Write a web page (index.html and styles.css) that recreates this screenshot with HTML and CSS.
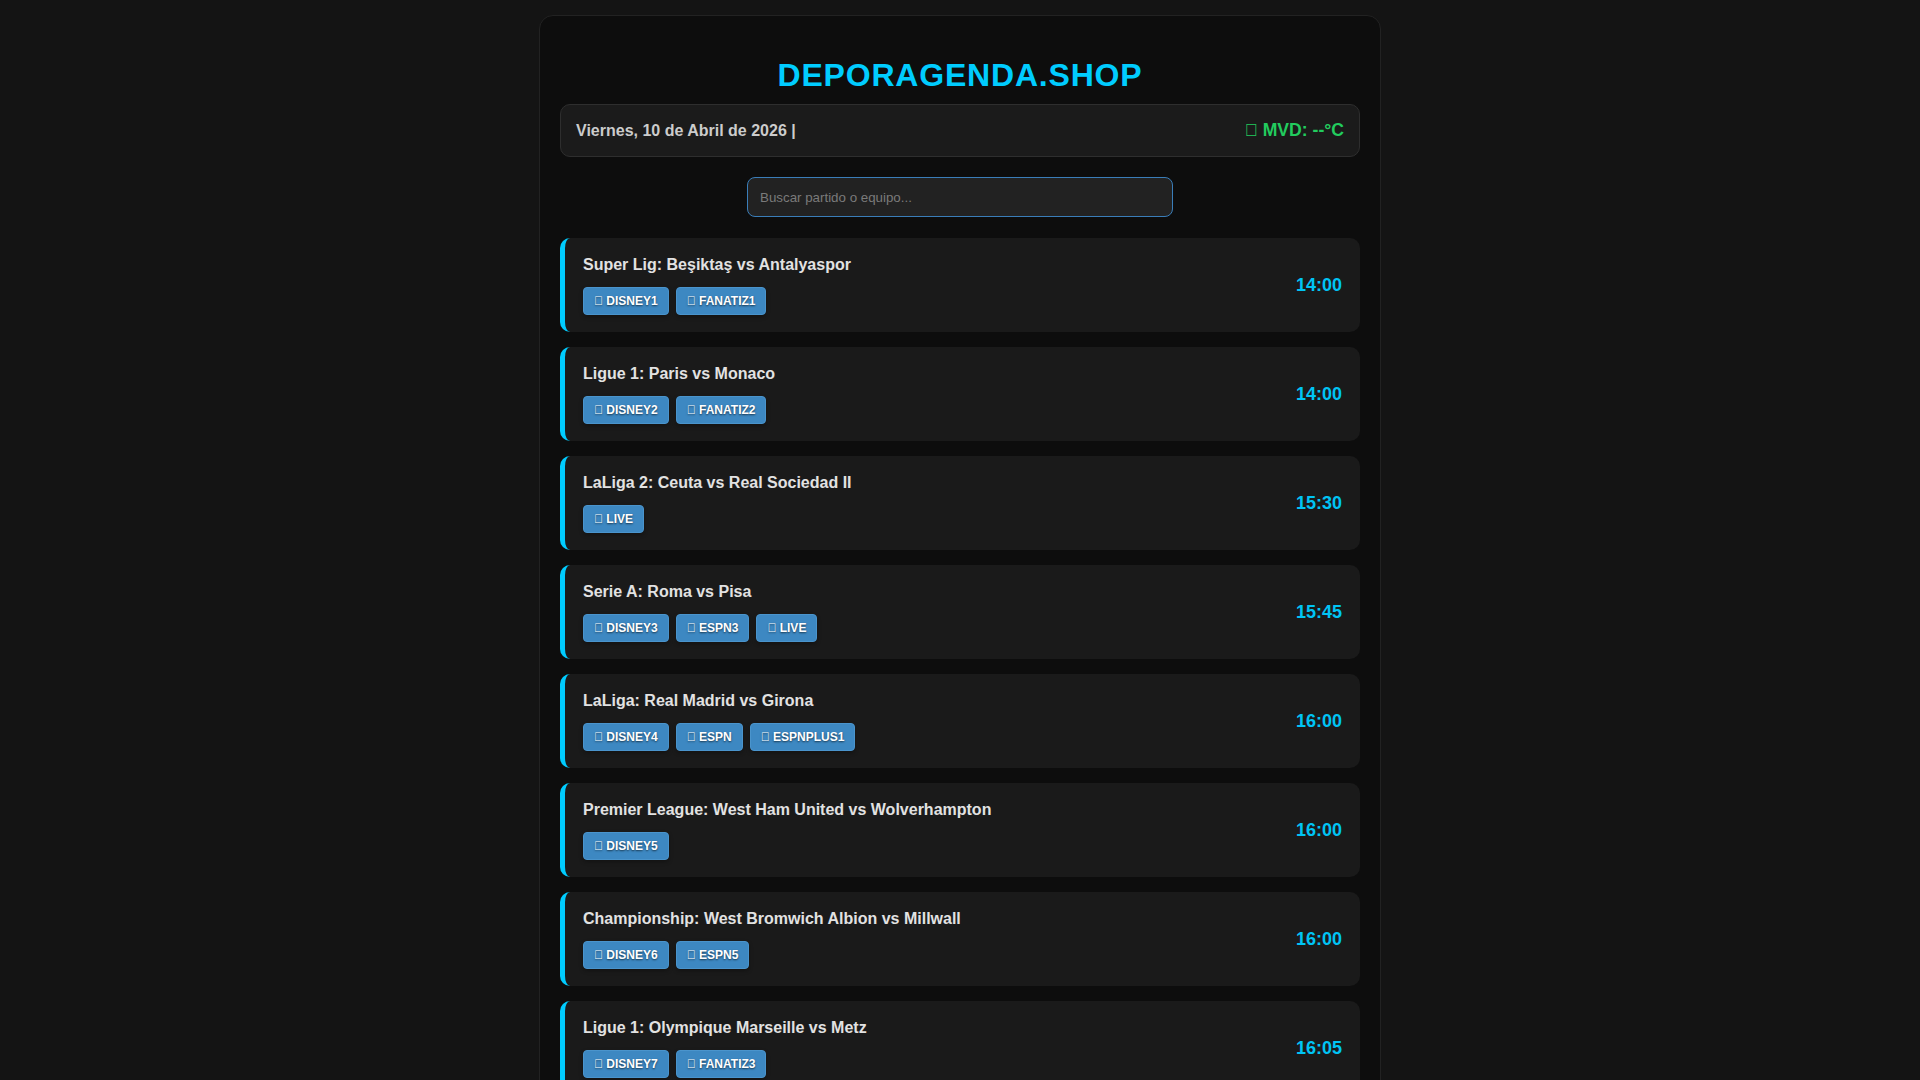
FILE: index.html
```html
<!DOCTYPE html>
<html lang="es">
<head>
<meta charset="utf-8">
<title>DEPORAGENDA.SHOP</title>
<link rel="stylesheet" href="styles.css">
</head>
<body>
<div class="container">
  <h1 class="brand">DEPORAGENDA.SHOP</h1>
  <div class="info-bar">
    <span class="date">Viernes, 10 de Abril de 2026 |</span>
    <span class="weather"><span class="ico">&#xf2c9;</span> MVD: --°C</span>
  </div>
  <div class="search-wrap">
    <input class="search" type="text" placeholder="Buscar partido o equipo...">
  </div>

  <div class="event">
    <div class="event-main">
      <div class="event-title">Super Lig: Beşiktaş vs Antalyaspor</div>
      <div class="channels">
        <a class="ch"><span class="ico">&#xf144;</span> DISNEY1</a>
        <a class="ch"><span class="ico">&#xf144;</span> FANATIZ1</a>
      </div>
    </div>
    <div class="time">14:00</div>
  </div>

  <div class="event">
    <div class="event-main">
      <div class="event-title">Ligue 1: Paris vs Monaco</div>
      <div class="channels">
        <a class="ch"><span class="ico">&#xf144;</span> DISNEY2</a>
        <a class="ch"><span class="ico">&#xf144;</span> FANATIZ2</a>
      </div>
    </div>
    <div class="time">14:00</div>
  </div>

  <div class="event">
    <div class="event-main">
      <div class="event-title">LaLiga 2: Ceuta vs Real Sociedad II</div>
      <div class="channels">
        <a class="ch"><span class="ico">&#xf144;</span> LIVE</a>
      </div>
    </div>
    <div class="time">15:30</div>
  </div>

  <div class="event">
    <div class="event-main">
      <div class="event-title">Serie A: Roma vs Pisa</div>
      <div class="channels">
        <a class="ch"><span class="ico">&#xf144;</span> DISNEY3</a>
        <a class="ch"><span class="ico">&#xf144;</span> ESPN3</a>
        <a class="ch"><span class="ico">&#xf144;</span> LIVE</a>
      </div>
    </div>
    <div class="time">15:45</div>
  </div>

  <div class="event">
    <div class="event-main">
      <div class="event-title">LaLiga: Real Madrid vs Girona</div>
      <div class="channels">
        <a class="ch"><span class="ico">&#xf144;</span> DISNEY4</a>
        <a class="ch"><span class="ico">&#xf144;</span> ESPN</a>
        <a class="ch"><span class="ico">&#xf144;</span> ESPNPLUS1</a>
      </div>
    </div>
    <div class="time">16:00</div>
  </div>

  <div class="event">
    <div class="event-main">
      <div class="event-title">Premier League: West Ham United vs Wolverhampton</div>
      <div class="channels">
        <a class="ch"><span class="ico">&#xf144;</span> DISNEY5</a>
      </div>
    </div>
    <div class="time">16:00</div>
  </div>

  <div class="event">
    <div class="event-main">
      <div class="event-title">Championship: West Bromwich Albion vs Millwall</div>
      <div class="channels">
        <a class="ch"><span class="ico">&#xf144;</span> DISNEY6</a>
        <a class="ch"><span class="ico">&#xf144;</span> ESPN5</a>
      </div>
    </div>
    <div class="time">16:00</div>
  </div>

  <div class="event">
    <div class="event-main">
      <div class="event-title">Ligue 1: Olympique Marseille vs Metz</div>
      <div class="channels">
        <a class="ch"><span class="ico">&#xf144;</span> DISNEY7</a>
        <a class="ch"><span class="ico">&#xf144;</span> FANATIZ3</a>
      </div>
    </div>
    <div class="time">16:05</div>
  </div>
</div>
</body>
</html>
```

FILE: styles.css
```css
html, body {
  margin: 0;
  padding: 0;
}
body {
  background: #141414;
  font-family: "Liberation Sans", Arial, sans-serif;
  color: #e0e0e0;
  padding-top: 15px;
}
.container {
  max-width: 800px;
  margin: 0 auto;
  padding: 20px;
  background: #0d0d0d;
  border: 1px solid #222222;
  border-radius: 14px;
}
.brand {
  margin: 0.67em 0 10px;
  font-size: 32px;
  letter-spacing: 0.8px;
  text-align: center;
  color: #00ccff;
  font-weight: bold;
}
.info-bar {
  display: flex;
  justify-content: space-between;
  align-items: center;
  padding: 15px;
  background: #1b1b1b;
  border: 1px solid #2e2e2e;
  border-radius: 10px;
  font-size: 16px;
  font-weight: bold;
}
.date {
  color: #cccccc;
}
.weather {
  color: #22cc5e;
  font-size: 17.6px;
}
.search-wrap {
  display: flex;
  justify-content: center;
  margin: 20px 0 21px;
}
.search {
  box-sizing: border-box;
  width: 426px;
  height: 40px;
  padding: 0 12px;
  font-family: "Liberation Sans", Arial, sans-serif;
  font-size: 13.333px;
  color: #dddddd;
  background: #222222;
  border: 1px solid #3a7db8;
  border-radius: 8px;
  outline: none;
}
.search::placeholder {
  color: #7a7a7a;
}
.event {
  display: flex;
  justify-content: space-between;
  align-items: center;
  background: #1a1a1a;
  border-left: 5px solid #00ccff;
  border-radius: 10px;
  padding: 18px 18px 17px;
  margin-bottom: 15px;
}
.event-title {
  font-size: 16px;
  font-weight: bold;
  color: #e2e2e2;
  margin-bottom: 13px;
}
.channels {
  display: flex;
  gap: 7px;
}
.ch {
  display: inline-block;
  padding: 6px 10px;
  background: #3d88c2;
  border: 1px solid #4a94cc;
  border-radius: 4px;
  color: #ffffff;
  font-size: 12px;
  font-weight: bold;
  text-shadow: 0 1px 2px rgba(0, 0, 0, 0.6);
  box-shadow: 0 2px 4px rgba(0, 0, 0, 0.3);
}
.time {
  font-size: 18px;
  font-weight: bold;
  color: #00c4f4;
}
```
